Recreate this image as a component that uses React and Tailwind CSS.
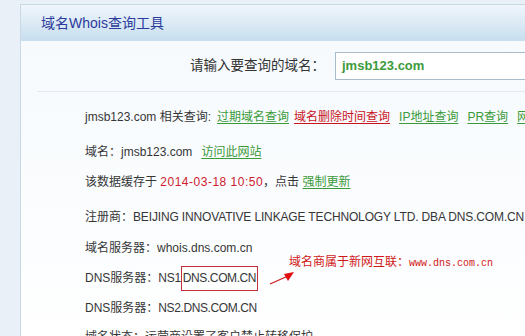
import React from "react";

const green = "text-[#3a9a3a] underline underline-offset-2";
const red = "text-[#c8141e] underline underline-offset-2";

export default function App() {
  return (
    <div
      className="w-[525px] h-[336px] overflow-hidden bg-[#e9f0f7] pt-1 pl-5 text-[12px] text-[#363636]"
      style={{ fontFamily: '"Liberation Sans", "Noto Sans CJK SC", sans-serif' }}
    >
      <div className="w-[600px] h-[400px] border-l border-t border-[#c9d8e5] bg-white">
        {/* Header */}
        <div className="h-[36px] flex items-center pl-5 bg-gradient-to-b from-[#f0f6fc] to-[#c7deee] text-[14px] text-[#2b3a9c]">
          域名Whois查询工具
        </div>

        <div className="bg-gradient-to-b from-[#f6fafd] to-white">
          {/* Search row */}
          <div className="h-[50px] flex items-center pl-[169px] whitespace-nowrap">
            <span className="w-[145px] shrink-0 text-[13.5px] text-[#333]">请输入要查询的域名：</span>
            <div className="w-[240px] shrink-0 h-[28px] flex items-center pl-[6px] border border-[#a8bccb] bg-white text-[13px] font-bold text-[#3c9a3c]">
              jmsb123.com
            </div>
          </div>
          <div className="ml-4 border-t border-[#e1eaf2]" />

          {/* Rows */}
          <div className="pl-[64px] pt-[10px] whitespace-nowrap">
            <div className="h-[30px] flex items-center">
              <span>jmsb123.com 相关查询:</span>
              <span className={`${green} ml-[6px]`}>过期域名查询</span>
              <span className={`${red} ml-[5px]`}>域名删除时间查询</span>
              <span className={`${green} ml-[9px]`}>IP地址查询</span>
              <span className={`${green} ml-[9px]`}>PR查询</span>
              <span className={`${green} ml-[9px]`}>网站收录查询</span>
            </div>
            <div className="h-[30px] mt-[5px] flex items-center">
              <span>域名：jmsb123.com</span>
              <span className={`${green} ml-[9px]`}>访问此网站</span>
            </div>
            <div className="h-[30px] flex items-center">
              <span>该数据缓存于&nbsp;</span>
              <span className="text-[#d0202e] tracking-[0.5px]">2014-03-18 10:50</span>
              <span>，点击&nbsp;</span>
              <span className={green}>强制更新</span>
            </div>
            <div className="h-[30px] mt-[5px] flex items-center">
              <span>注册商：</span>
              <span className="tracking-[-0.15px]">
                BEIJING INNOVATIVE LINKAGE TECHNOLOGY LTD. DBA DNS.COM.CN
              </span>
            </div>
            <div className="h-[30px] mt-[1px] flex items-center">
              域名服务器：whois.dns.com.cn
            </div>
            <div className="relative h-[30px] flex items-center">
              <span>DNS服务器：</span>
              <span className="tracking-[-0.3px]">NS1</span>
              <span className="inline-flex items-center h-[25px] px-[1px] border border-[#c0303a] tracking-[-0.4px]">
                DNS.COM.CN
              </span>
              <svg
                className="absolute left-[183px] top-[5px]"
                width="30"
                height="20"
                viewBox="0 0 30 20"
              >
                <line x1="2" y1="16" x2="20" y2="8" stroke="#d01818" strokeWidth="1.2" />
                <polygon points="26,4 16,6 20,13" fill="#e01010" />
              </svg>
              <span className="absolute left-[204px] top-[-10px] text-[#d01818]">
                域名商属于新网互联：
                <span
                  className="text-[10px]"
                  style={{ fontFamily: '"Liberation Mono", monospace' }}
                >
                  www.dns.com.cn
                </span>
              </span>
            </div>
            <div className="h-[29px] flex items-center">
              <span>DNS服务器：</span>
              <span className="tracking-[-0.4px]">NS2.DNS.COM.CN</span>
            </div>
            <div className="h-[30px] flex items-center">域名状态：运营商设置了客户禁止转移保护</div>
          </div>
        </div>
      </div>
    </div>
  );
}
